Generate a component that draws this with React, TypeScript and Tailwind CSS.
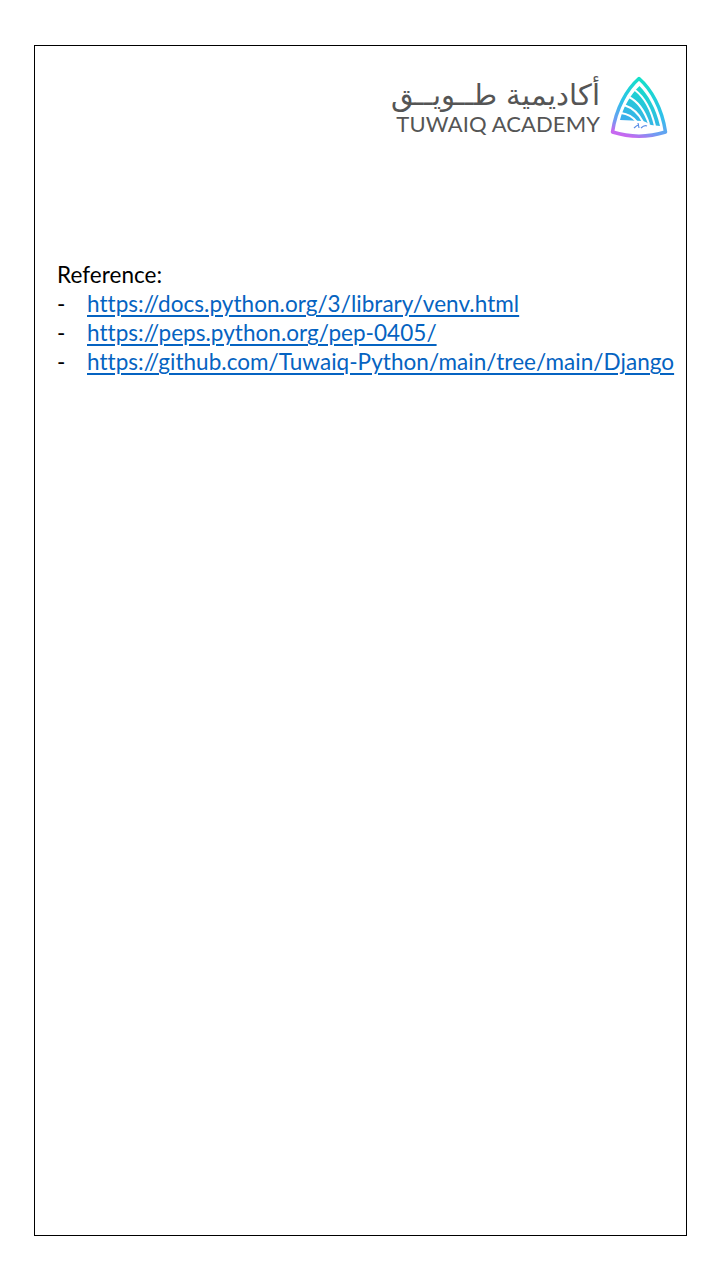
function LogoMark() {
  return (
    <svg width="58" height="62" viewBox="0 0 58 62" fill="none">
      <defs>
        <linearGradient id="mark" x1="0.62" y1="0" x2="0.3" y2="1">
          <stop offset="0" stopColor="#12e2c6" />
          <stop offset="0.5" stopColor="#2fc0ea" />
          <stop offset="0.82" stopColor="#6f9cf2" />
          <stop offset="1" stopColor="#c668f0" />
        </linearGradient>
        <linearGradient id="fan" x1="0.7" y1="0" x2="0.2" y2="1">
          <stop offset="0" stopColor="#14dfc8" />
          <stop offset="1" stopColor="#3fa8f0" />
        </linearGradient>
      </defs>
      <path
        d="M29 2.500 C41 13 52 32 55.500 56 C38 61.500 20 61.500 2.500 56 C6 32 17 13 29 2.500 Z"
        stroke="url(#mark)"
        strokeWidth="3.500"
        strokeLinejoin="round"
      />
      <path
        d="M29.500 10 C38 19 46 32 50 50 L41 49 C38 47 36 46 33 45 L10 44 C13 32 20 19 29.500 10 Z"
        fill="url(#fan)"
      />
      {/* white rays cut the fan */}
      <g stroke="white" strokeWidth="2">
        <path d="M25 14 C34 21 41 33 45 50" />
        <path d="M19 21 C29 26 35 36 39 48" />
        <path d="M14 29 C23 32 29 38 33 46" />
        <path d="M11 37 C18 38 23 41 27 46" />
      </g>
      <path d="M8 45 L32 45 L36 53 L8 53 Z" fill="white" />
      <path
        d="M24 52 C26 50 27 49 29 49 M31 52 C33 50 35 49 37 50 M28 47 L29 52"
        stroke="#5c8fe6"
        strokeWidth="1.200"
      />
    </svg>
  );
}

function Logo() {
  return (
    <div className="flex items-center gap-[10px] text-[#555555]">
      <div className="flex w-[206px] flex-col items-end">
        <div
          dir="rtl"
          className="w-full text-right font-['DejaVu_Sans',sans-serif] text-[29px] leading-[34px] font-extralight whitespace-nowrap"
        >
          أكاديمية طــويــق
        </div>
        <div className="font-['Lato',sans-serif] text-[22px] leading-[24px] tracking-[0.1px] whitespace-nowrap">
          TUWAIQ ACADEMY
        </div>
      </div>
      <LogoMark />
    </div>
  );
}

const links = [
  "https://docs.python.org/3/library/venv.html",
  "https://peps.python.org/pep-0405/",
  "https://github.com/Tuwaiq-Python/main/tree/main/Django",
];

export default function App() {
  return (
    <div className="min-h-[1280px] bg-white pt-[45px] pl-[34px] font-['Lato',sans-serif]">
      <div className="h-[1191px] w-[653px] border border-black">
        <div className="flex justify-end pt-[30px] pr-[18px]">
          <Logo />
        </div>
        <div className="pt-[122px] pl-[22px] text-[22.500px] leading-[29px] tracking-[0.04px] text-black">
          <div>Reference:</div>
          {links.map((link) => (
            <div key={link} className="flex">
              <span className="w-[30px]">-</span>
              <a
                href={link}
                className="whitespace-nowrap text-[#0563c1] underline decoration-2 underline-offset-[3px]"
              >
                {link}
              </a>
            </div>
          ))}
        </div>
      </div>
    </div>
  );
}
